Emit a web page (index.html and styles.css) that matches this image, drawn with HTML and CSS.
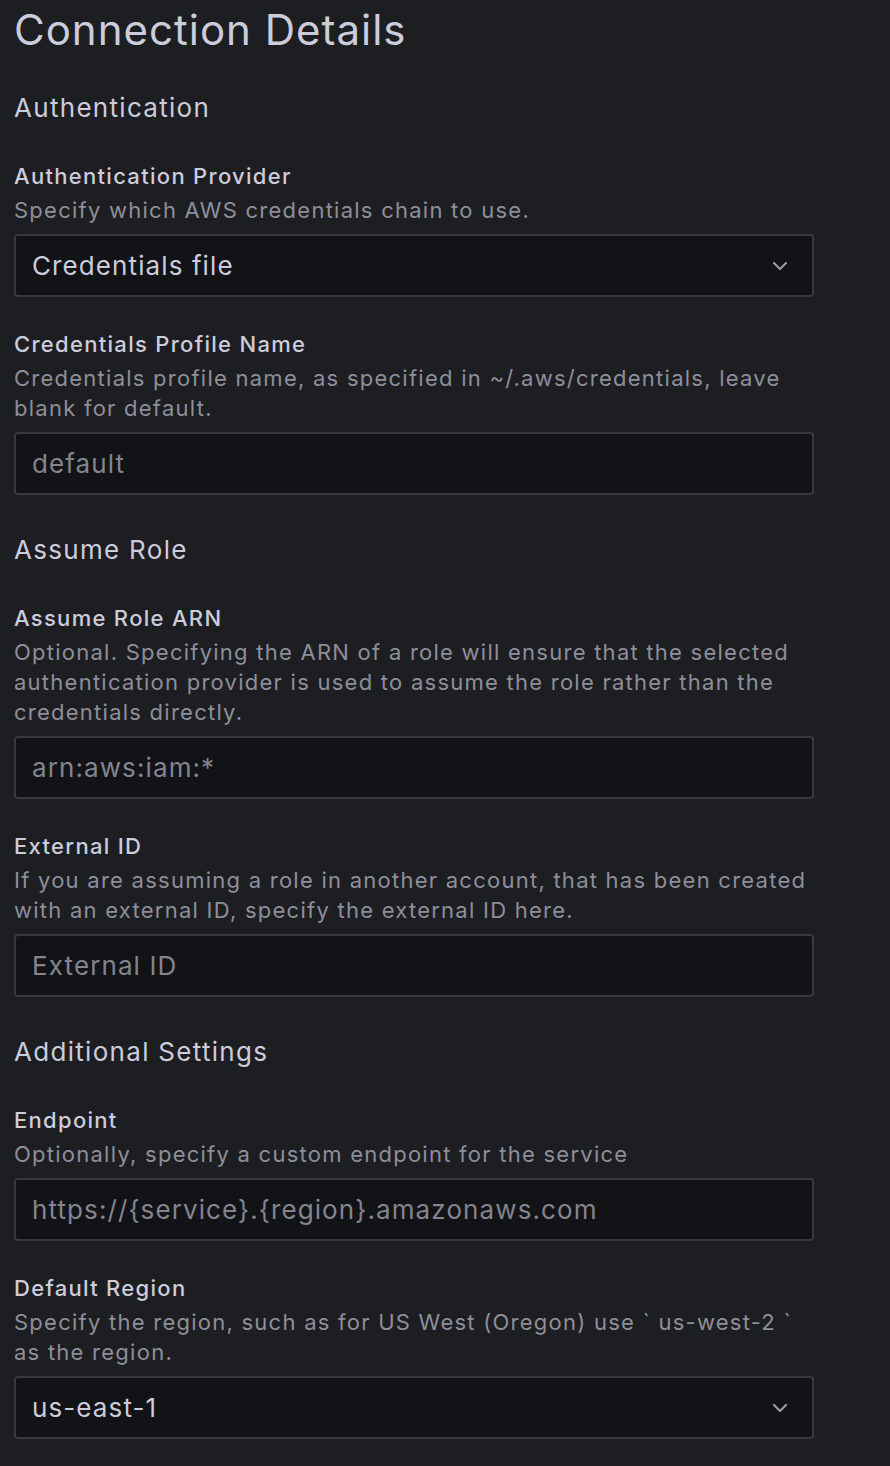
FILE: index.html
```html
<!DOCTYPE html>
<html lang="en">
<head>
<meta charset="utf-8">
<title>Connection Details</title>
<link rel="stylesheet" href="styles.css">
</head>
<body>
<main class="page">
  <h1 class="title">Connection Details</h1>

  <h2 class="section">Authentication</h2>

  <div class="field">
    <div class="label">Authentication Provider</div>
    <div class="desc">Specify which AWS credentials chain to use.</div>
    <div class="input select">
      <span class="value">Credentials file</span>
      <svg class="chev" width="16" height="10" viewBox="0 0 16 10"><path d="M2 2 L8 8 L14 2" fill="none" stroke="currentColor" stroke-width="2.2" stroke-linecap="round" stroke-linejoin="round"/></svg>
    </div>
  </div>

  <div class="field">
    <div class="label">Credentials Profile Name</div>
    <div class="desc">Credentials profile name, as specified in ~/.aws/credentials, leave blank for default.</div>
    <div class="input"><span class="placeholder">default</span></div>
  </div>

  <h2 class="section">Assume Role</h2>

  <div class="field">
    <div class="label">Assume Role ARN</div>
    <div class="desc">Optional. Specifying the ARN of a role will ensure that the selected authentication provider is used to assume the role rather than the credentials directly.</div>
    <div class="input"><span class="placeholder">arn:aws:iam:*</span></div>
  </div>

  <div class="field">
    <div class="label">External ID</div>
    <div class="desc">If you are assuming a role in another account, that has been created with an external ID, specify the external ID here.</div>
    <div class="input"><span class="placeholder">External ID</span></div>
  </div>

  <h2 class="section">Additional Settings</h2>

  <div class="field">
    <div class="label">Endpoint</div>
    <div class="desc">Optionally, specify a custom endpoint for the service</div>
    <div class="input"><span class="placeholder">https://{service}.{region}.amazonaws.com</span></div>
  </div>

  <div class="field">
    <div class="label">Default Region</div>
    <div class="desc">Specify the region, such as for US West (Oregon) use ` us-west-2 ` as the region.</div>
    <div class="input select">
      <span class="value">us-east-1</span>
      <svg class="chev" width="16" height="10" viewBox="0 0 16 10"><path d="M2 2 L8 8 L14 2" fill="none" stroke="currentColor" stroke-width="2.2" stroke-linecap="round" stroke-linejoin="round"/></svg>
    </div>
  </div>
</main>
</body>
</html>
```

FILE: styles.css
```css
* { box-sizing: border-box; }
html, body {
  margin: 0;
  padding: 0;
  background: #1d1e22;
}
body {
  font-family: Inter, "Noto Sans", "Liberation Sans", sans-serif;
  color: #ccccdc;
  min-height: 1466px;
}
.page {
  width: 828px;
  padding: 0 14px 30px 14px;
  display: flex;
  flex-direction: column;
}
.title {
  margin: 0;
  font-size: 42px;
  font-weight: 400;
  line-height: 60px;
  letter-spacing: 1px;
  color: #ccccdc;
}
.section {
  margin: 31px 0 36px 0;
  font-size: 26px;
  font-weight: 400;
  line-height: 34px;
  letter-spacing: 1.3px;
  color: #ccccdc;
}
.field + .section { margin-top: 38px; }
.field {
  display: flex;
  flex-direction: column;
}
.field + .field { margin-top: 32px; }
.label {
  font-size: 22px;
  font-weight: 500;
  line-height: 30px;
  letter-spacing: 1.3px;
  color: #ccccdc;
}
.desc {
  margin-top: 4px;
  font-size: 22px;
  font-weight: 400;
  line-height: 30px;
  letter-spacing: 1.25px;
  color: #8e8e9b;
}
.input {
  margin-top: 9px;
  height: 63px;
  border: 2px solid #38393e;
  border-radius: 4px;
  background: #121317;
  display: flex;
  align-items: center;
  padding: 0 16px;
  font-size: 26px;
  letter-spacing: 1.1px;
}
.value { color: #ccccdc; flex: 1; }
.placeholder { color: #84848f; }
.chev {
  color: #9a9aa5;
  margin-right: 8px;
}
```
